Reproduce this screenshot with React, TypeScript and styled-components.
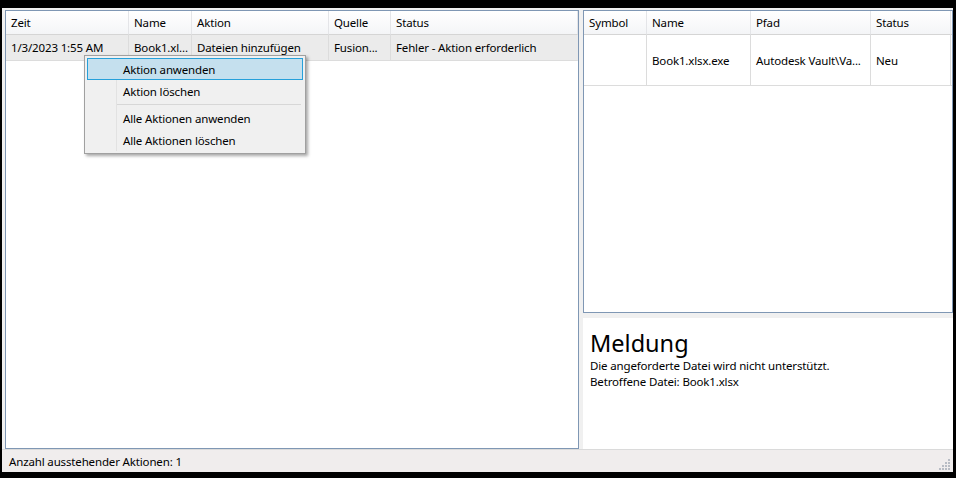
import React from "react";
import styled, { createGlobalStyle, css } from "styled-components";

const Global = createGlobalStyle`
  html, body { margin: 0; padding: 0; background: #000; }
  body { font-family: "Segoe UI", "Noto Sans", "Open Sans", sans-serif; font-size: 11.5px; letter-spacing: -0.15px; color: #000; }
  #root { width: 956px; height: 478px; }
`;

const Screen = styled.div`
  width: 956px;
  height: 478px;
  background: #000;
  padding: 8px 3px 6px 2px;
  box-sizing: border-box;
  display: flex;
`;

const Window = styled.div`
  flex: 1;
  background: #f0f0f0;
  display: flex;
  flex-direction: column;
  position: relative;
`;

const Main = styled.div`
  flex: 1;
  display: flex;
  gap: 4px;
  padding: 2px 0 0 3px;
  min-height: 0;
`;

const ListBox = styled.div<{ $w?: number; $h?: number }>`
  border: 1px solid #7f97b4;
  background: #fff;
  box-sizing: border-box;
  ${(p) => p.$w && css`width: ${p.$w}px;`}
  ${(p) => p.$h && css`height: ${p.$h}px;`}
  overflow: hidden;
  position: relative;
`;

const Grid = styled.div<{ $cols: string }>`
  display: grid;
  grid-template-columns: ${(p) => p.$cols};
`;

const HeadCell = styled.div`
  height: 23px;
  line-height: 24px;
  padding-left: 5px;
  background: linear-gradient(#ffffff, #f4f5f7);
  border-right: 1px solid #e4e5e8;
  border-bottom: 1px solid #d5d5d5;
  white-space: nowrap;
  overflow: hidden;
`;

const Cell = styled.div<{ $h: number; $bg?: string; $last?: boolean }>`
  height: ${(p) => p.$h}px;
  line-height: ${(p) => p.$h + 1}px;
  padding-left: 5px;
  background: ${(p) => p.$bg || "#fff"};
  border-right: 1px solid ${(p) => (p.$last ? "transparent" : "#dcdcdc")};
  border-bottom: 1px solid #dcdcdc;
  white-space: nowrap;
  overflow: hidden;
`;

const RightCol = styled.div`
  width: 370px;
  display: flex;
  flex-direction: column;
  gap: 5px;
`;

const MessagePanel = styled.div`
  flex: 1;
  background: #fff;
  padding: 10px 0 0 7px;
`;

const MessageTitle = styled.div`
  font-size: 23.5px;
  line-height: 30px;
  letter-spacing: 0;
`;

const MessageLine = styled.div`
  line-height: 16px;
`;

const StatusBar = styled.div`
  height: 22px;
  background: #f0eded;
  display: flex;
  align-items: center;
  padding-left: 7px;
  position: relative;
  border-top: 1px solid #dadada;
`;

const Grip = styled.svg`
  position: absolute;
  right: 2px;
  bottom: 2px;
`;

const Menu = styled.div`
  position: absolute;
  left: 82px;
  top: 47px;
  width: 222px;
  padding: 2px;
  background: #f0f0f0;
  border: 1px solid #a0a0a0;
  box-shadow: 2px 2px 3px rgba(0, 0, 0, 0.35);
  box-sizing: border-box;
`;

const MenuGutter = styled.div`
  position: absolute;
  left: 31px;
  top: 2px;
  bottom: 2px;
  width: 1px;
  background: #e2e2e2;
`;

const MenuItem = styled.div<{ $active?: boolean }>`
  height: 22px;
  line-height: 21px;
  padding-left: 35px;
  border: 1px solid ${(p) => (p.$active ? "#26a0da" : "transparent")};
  background: ${(p) => (p.$active ? "#c5e0ee" : "transparent")};
  box-sizing: border-box;
  position: relative;
`;

const MenuSep = styled.div`
  height: 1px;
  background: #d7d7d7;
  margin: 2px 2px 2px 30px;
  position: relative;
`;

export default function App() {
  const selBg = "#ebebeb";
  return (
    <>
      <Global />
      <Screen>
        <Window>
          <Main>
            <ListBox $w={574}>
              <Grid $cols="123px 63px 137px 62px 1fr">
                <HeadCell>Zeit</HeadCell>
                <HeadCell>Name</HeadCell>
                <HeadCell>Aktion</HeadCell>
                <HeadCell>Quelle</HeadCell>
                <HeadCell>Status</HeadCell>
                <Cell $h={25} $bg={selBg}>1/3/2023 1:55 AM</Cell>
                <Cell $h={25} $bg={selBg}>Book1.xl...</Cell>
                <Cell $h={25} $bg={selBg}>Dateien hinzufügen</Cell>
                <Cell $h={25} $bg={selBg}>Fusion...</Cell>
                <Cell $h={25} $bg={selBg} $last>Fehler - Aktion erforderlich</Cell>
              </Grid>
            </ListBox>
            <RightCol>
              <ListBox $h={303}>
                <Grid $cols="63px 104px 120px 80px 1fr">
                  <HeadCell>Symbol</HeadCell>
                  <HeadCell>Name</HeadCell>
                  <HeadCell>Pfad</HeadCell>
                  <HeadCell>Status</HeadCell>
                  <HeadCell />
                  <Cell $h={50}></Cell>
                  <Cell $h={50}>Book1.xlsx.exe</Cell>
                  <Cell $h={50}>Autodesk Vault\Va...</Cell>
                  <Cell $h={50}>Neu</Cell>
                  <Cell $h={50} $last></Cell>
                </Grid>
              </ListBox>
              <MessagePanel>
                <MessageTitle>Meldung</MessageTitle>
                <MessageLine>Die angeforderte Datei wird nicht unterstützt.</MessageLine>
                <MessageLine>Betroffene Datei: Book1.xlsx</MessageLine>
              </MessagePanel>
            </RightCol>
          </Main>
          <StatusBar>
            Anzahl ausstehender Aktionen: 1
            <Grip width="12" height="12" viewBox="0 0 12 12">
              {[
                [9, 1], [9, 4], [6, 4], [9, 7], [6, 7], [3, 7], [9, 10], [6, 10], [3, 10], [0, 10],
              ].map(([x, y], i) => (
                <rect key={i} x={x} y={y} width="2" height="2" fill="#b8bcc4" />
              ))}
            </Grip>
          </StatusBar>
          <Menu>
            <MenuGutter />
            <MenuItem $active>Aktion anwenden</MenuItem>
            <MenuItem>Aktion löschen</MenuItem>
            <MenuSep />
            <MenuItem>Alle Aktionen anwenden</MenuItem>
            <MenuItem>Alle Aktionen löschen</MenuItem>
          </Menu>
        </Window>
      </Screen>
    </>
  );
}
